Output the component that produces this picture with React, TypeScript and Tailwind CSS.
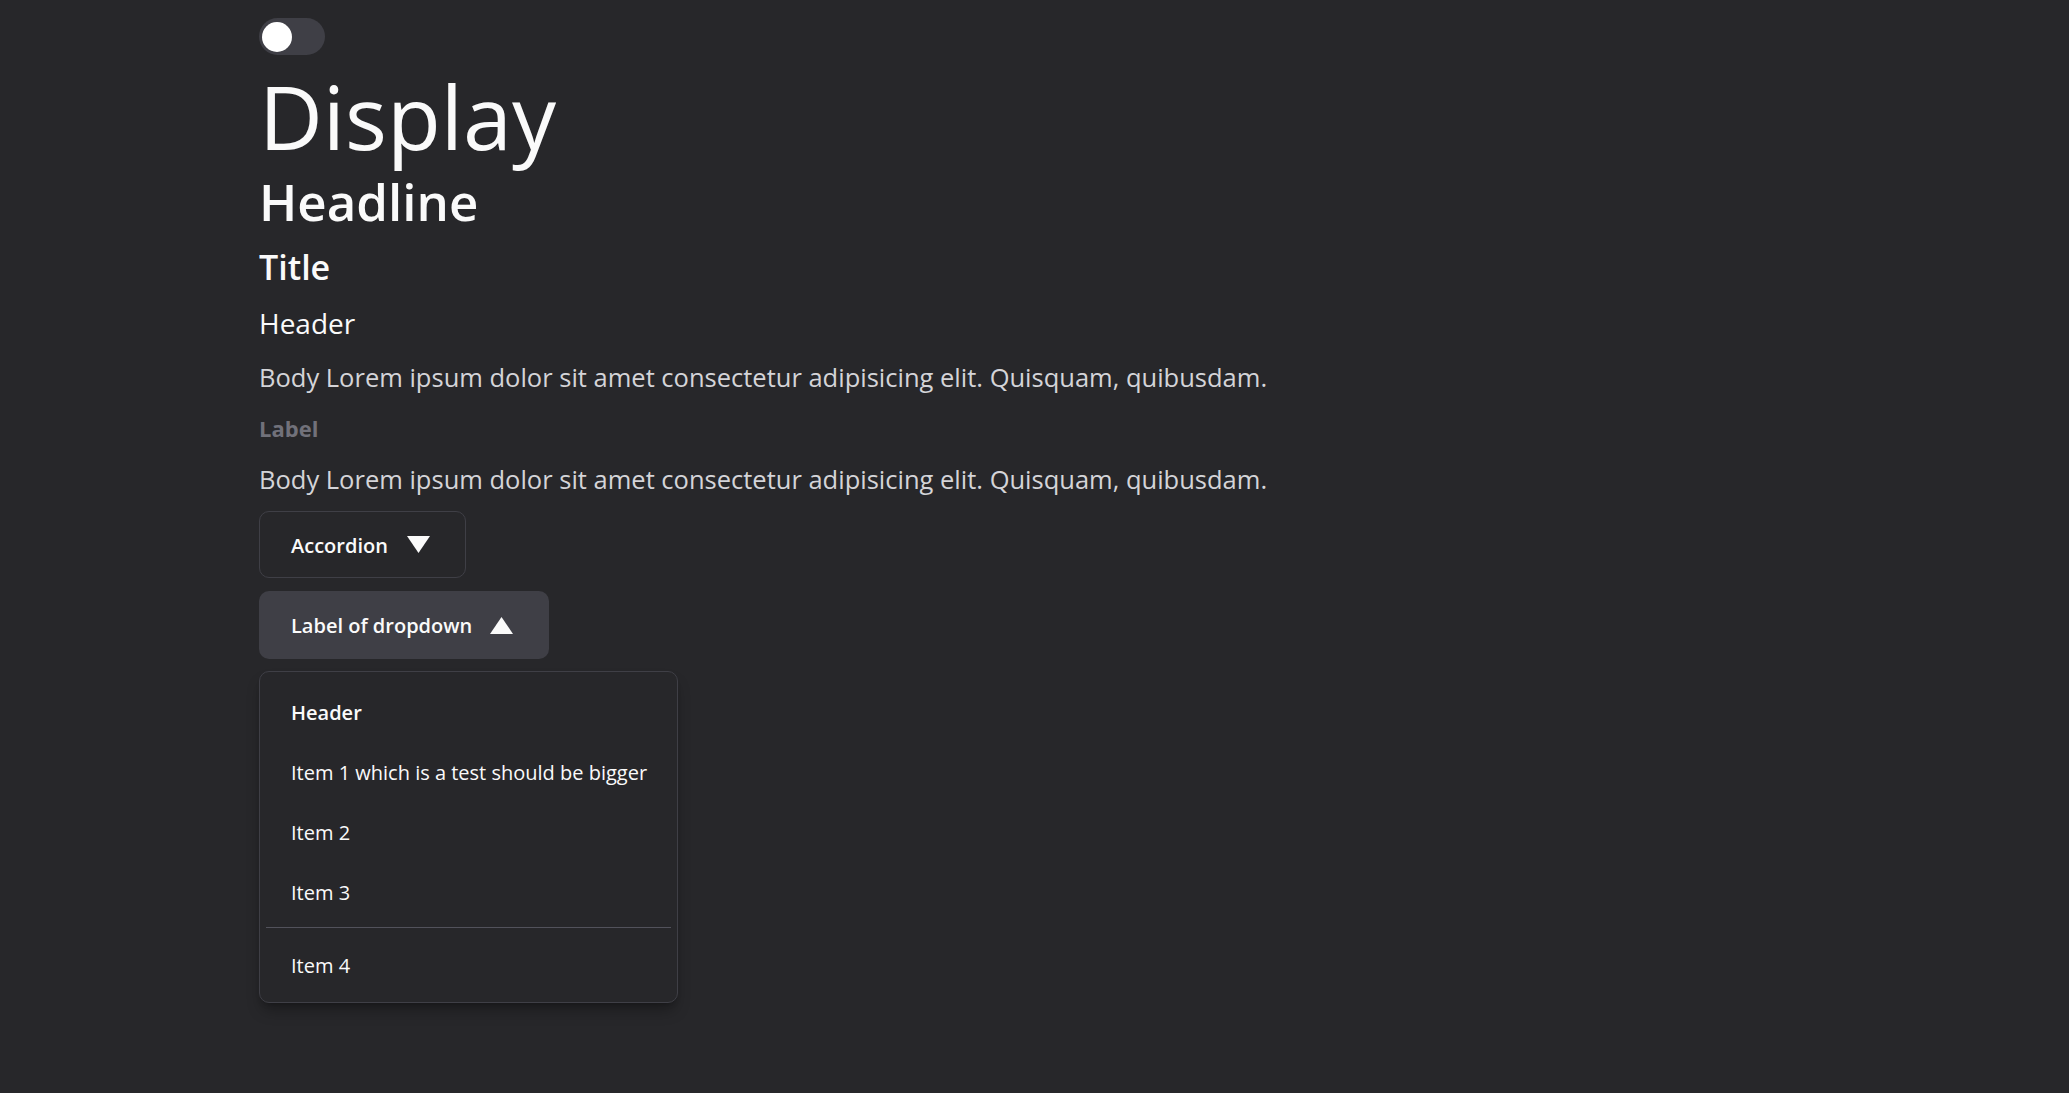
import { useState } from 'react'

function Toggle() {
  const [on, setOn] = useState(false)
  return (
    <button
      onClick={() => setOn(!on)}
      className="mt-[18px] flex h-[37px] w-[66px] items-center rounded-full bg-[#3f3f46] px-[3px]"
    >
      <span
        className={
          on
            ? 'h-[30px] w-[30px] translate-x-[30px] rounded-full bg-white'
            : 'h-[30px] w-[30px] rounded-full bg-white'
        }
      />
    </button>
  )
}

function Triangle({ up }: { up?: boolean }) {
  return (
    <svg width="23" height="17" viewBox="0 0 23 17" className="shrink-0">
      {up ? <polygon points="11.5,0 23,17 0,17" fill="#fafafa" /> : <polygon points="0,0 23,0 11.5,17" fill="#fafafa" />}
    </svg>
  )
}

const items = ['Item 1 which is a test should be bigger', 'Item 2', 'Item 3']

export default function App() {
  const [open, setOpen] = useState(true)

  return (
    <div className="min-h-screen bg-[#27272a] pl-[259px] text-[#fafafa]" style={{ fontFamily: '"Open Sans", "Noto Sans", sans-serif' }}>
      <div className="flex flex-col items-start">
        <Toggle />
        <h1 className="mt-[1px] text-[88px] leading-[120px] font-normal">Display</h1>
        <h2 className="text-[51px] leading-[50px] font-semibold">Headline</h2>
        <h3 className="mt-[19px] text-[34px] leading-[44px] font-semibold">Title</h3>
        <h4 className="mt-[16px] text-[28px] leading-[36px] font-normal">Header</h4>
        <p className="mt-[19px] text-[25.5px] leading-[34px] text-[#d4d4d8]">
          Body Lorem ipsum dolor sit amet consectetur adipisicing elit. Quisquam, quibusdam.
        </p>
        <span className="mt-[19px] text-[22px] leading-[30px] font-bold text-[#71717a]">Label</span>
        <p className="mt-[19px] text-[25.5px] leading-[34px] text-[#d4d4d8]">
          Body Lorem ipsum dolor sit amet consectetur adipisicing elit. Quisquam, quibusdam.
        </p>

        <button className="mt-[15px] flex h-[67px] w-[207px] items-center rounded-[10px] border border-[#3f3f46] pl-[31px] text-[20px] font-semibold">
          <span className="pt-[2px]">Accordion</span>
          <span className="ml-[19px]">
            <Triangle />
          </span>
        </button>

        <button
          onClick={() => setOpen(!open)}
          className="mt-[13px] flex h-[68px] w-[290px] items-center rounded-[10px] bg-[#3f3f46] pl-[32px] text-[20px] font-semibold"
        >
          <span className="pt-[2px]">Label of dropdown</span>
          <span className="ml-[18px]">
            <Triangle up={open} />
          </span>
        </button>

        {open && (
          <div className="mt-[12px] w-[419px] rounded-[10px] border border-[#3f3f46] bg-[#27272a] px-[6px] pt-[11px] pb-[6px] shadow-lg shadow-black/30">
            <div className="flex h-[60px] items-center px-[25px] text-[20px] leading-[28px] font-semibold">Header</div>
            {items.map((item) => (
              <div key={item} className="flex h-[60px] items-center whitespace-nowrap px-[25px] text-[20px] leading-[28px]">
                {item}
              </div>
            ))}
            <div className="mt-[4px] h-px bg-[#52525b]" />
            <div className="mt-[8px] flex h-[60px] items-center px-[25px] text-[20px] leading-[28px]">Item 4</div>
          </div>
        )}
      </div>
    </div>
  )
}
